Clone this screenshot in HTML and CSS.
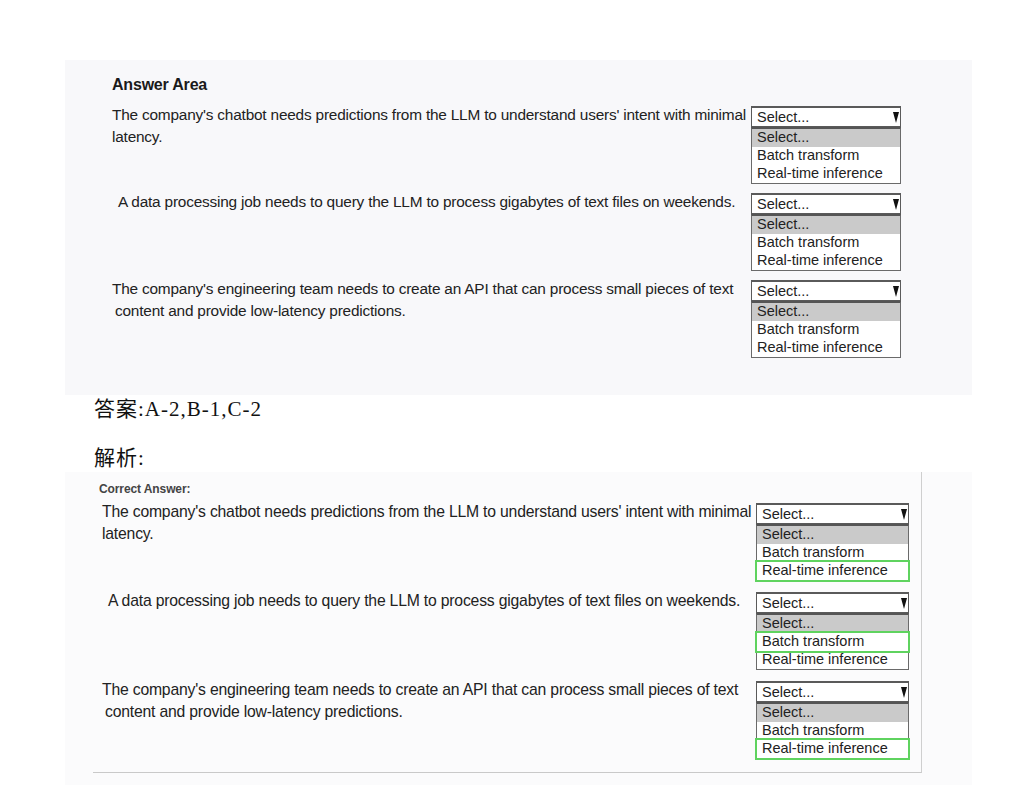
FILE: index.html
```html
<!DOCTYPE html>
<html lang="zh">
<head>
<meta charset="utf-8">
<title>Answer Area</title>
<link rel="stylesheet" href="styles.css">
</head>
<body>
<div class="page">
  <section class="shot shot-top">
    <h2 class="area-title">Answer Area</h2>
    <div class="rows">
      <div class="row">
        <p class="q">The company's chatbot needs predictions from the LLM to understand users' intent with minimal<br>latency.</p>
        <div class="dd">
          <div class="dd-head"><span>Select...</span><span class="arrow"></span></div>
          <div class="dd-list">
            <div class="opt sel">Select...</div>
            <div class="opt">Batch transform</div>
            <div class="opt">Real-time inference</div>
          </div>
        </div>
      </div>
      <div class="row">
        <p class="q q-indent">A data processing job needs to query the LLM to process gigabytes of text files on weekends.</p>
        <div class="dd">
          <div class="dd-head"><span>Select...</span><span class="arrow"></span></div>
          <div class="dd-list">
            <div class="opt sel">Select...</div>
            <div class="opt">Batch transform</div>
            <div class="opt">Real-time inference</div>
          </div>
        </div>
      </div>
      <div class="row">
        <p class="q">The company's engineering team needs to create an API that can process small pieces of text<br><span class="l2">content and provide low-latency predictions.</span></p>
        <div class="dd">
          <div class="dd-head"><span>Select...</span><span class="arrow"></span></div>
          <div class="dd-list">
            <div class="opt sel">Select...</div>
            <div class="opt">Batch transform</div>
            <div class="opt">Real-time inference</div>
          </div>
        </div>
      </div>
    </div>
  </section>

  <div class="cn">
    <p class="cn-line">答案:A-2,B-1,C-2</p>
    <p class="cn-line">解析:</p>
  </div>

  <section class="shot-bottom">
    <div class="frame">
      <h3 class="ca-title">Correct Answer:</h3>
      <div class="rows rows-b">
        <div class="row row-b">
          <p class="q">The company's chatbot needs predictions from the LLM to understand users' intent with minimal<br>latency.</p>
          <div class="dd dd-b">
            <div class="dd-head"><span>Select...</span><span class="arrow"></span></div>
            <div class="dd-list">
              <div class="opt sel">Select...</div>
              <div class="opt">Batch transform</div>
              <div class="opt ok">Real-time inference</div>
            </div>
          </div>
        </div>
        <div class="row row-b">
          <p class="q q-indent">A data processing job needs to query the LLM to process gigabytes of text files on weekends.</p>
          <div class="dd dd-b">
            <div class="dd-head"><span>Select...</span><span class="arrow"></span></div>
            <div class="dd-list">
              <div class="opt sel">Select...</div>
              <div class="opt ok">Batch transform</div>
              <div class="opt">Real-time inference</div>
            </div>
          </div>
        </div>
        <div class="row row-b">
          <p class="q">The company's engineering team needs to create an API that can process small pieces of text<br><span class="l2">content and provide low-latency predictions.</span></p>
          <div class="dd dd-b">
            <div class="dd-head"><span>Select...</span><span class="arrow"></span></div>
            <div class="dd-list">
              <div class="opt sel">Select...</div>
              <div class="opt">Batch transform</div>
              <div class="opt ok">Real-time inference</div>
            </div>
          </div>
        </div>
      </div>
    </div>
  </section>
</div>
</body>
</html>
```

FILE: styles.css
```css
* { box-sizing: border-box; }
html, body { margin: 0; padding: 0; background: #ffffff; }
body { font-family: "Liberation Sans", Arial, sans-serif; color: #1f1f1f; }

.page {
  padding-top: 60px;
  display: flex;
  flex-direction: column;
}

.shot {
  margin-left: 65px;
  width: 907px;
  height: 335px;
  background: #f8f8fa;
  padding: 16px 71px 0 47px;
}

.area-title {
  margin: 0;
  font-size: 16px;
  font-weight: bold;
  line-height: 18px;
  color: #1a1a1a;
  letter-spacing: -0.2px;
}

.rows {
  margin-top: 12px;
  display: flex;
  flex-direction: column;
  gap: 9px;
}

.row {
  display: flex;
  align-items: flex-start;
  justify-content: space-between;
}

.q {
  margin: 0;
  width: 636px;
  font-size: 15.4px;
  line-height: 22px;
  letter-spacing: -0.2px;
  color: #222;
  white-space: nowrap;
  margin-top: -2px;
}
.q-indent { padding-left: 6px; }
.l2 { padding-left: 3px; }

.dd {
  width: 150px;
  flex: none;
  font-size: 14.5px;
  color: #222;
}
.dd-head {
  height: 21px;
  border: 1px solid #5a5a5a;
  border-top-width: 2px;
  background: #fff;
  display: flex;
  align-items: center;
  justify-content: space-between;
  padding: 0 1px 0 5px;
  line-height: 17px;
}
.arrow {
  width: 0;
  height: 0;
  border-left: 3.5px solid transparent;
  border-right: 3.5px solid transparent;
  border-top: 11px solid #111;
}
.dd-list {
  border: 1px solid #6a6a6a;
  border-top: 2px solid #555;
  background: #fff;
}
.opt {
  height: 18px;
  line-height: 17px;
  padding-left: 5px;
  white-space: nowrap;
}
.opt.sel { background: #cacaca; }
.opt.ok {
  outline: 2px solid #5fd35f;
  outline-offset: 0;
  position: relative;
}

.cn {
  margin-left: 94px;
  margin-top: 0;
  display: flex;
  flex-direction: column;
  gap: 21px;
  font-family: "Liberation Serif", "Noto Sans CJK SC", serif;
  color: #111;
}
.cn-line {
  margin: 0;
  font-size: 21px;
  line-height: 28px;
  letter-spacing: 1px;
}

.shot-bottom {
  margin-left: 65px;
  width: 907px;
  background: #fbfbfc;
  margin-top: 0;
  padding: 0 0 12px 28px;
}
.frame {
  width: 829px;
  border-right: 1px solid #cfcfcf;
  border-bottom: 1px solid #c9c9c9;
  padding: 9px 12px 13px 6px;
}
.ca-title {
  margin: 0;
  font-size: 12px;
  line-height: 16px;
  font-weight: bold;
  color: #444;
  letter-spacing: -0.1px;
}
.rows-b {
  margin-top: 6px;
  gap: 11px;
}
.row-b .q {
  width: 652px;
  padding-left: 3px;
  font-size: 15.75px;
}
.row-b .q-indent { padding-left: 9px; }
.dd-b { width: 153px; }
```
